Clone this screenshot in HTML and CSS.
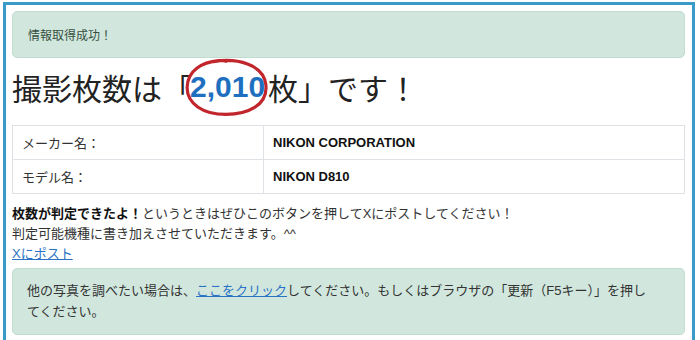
FILE: index.html
```html
<!DOCTYPE html>
<html lang="ja">
<head>
    <meta charset="UTF-8">
    <meta name="viewport" content="width=device-width, initial-scale=1.0">
    <title>撮影枚数チェッカー</title>
    <link rel="stylesheet" href="styles.css">
</head>
<body>
    <div class="frame">
        <div class="alert alert-ok">情報取得成功！</div>

        <h1 class="count-title">撮影枚数は「<span class="count"><span class="count-num">2,010</span><svg class="circle" viewBox="0 0 80 58" width="80" height="58" preserveAspectRatio="none" aria-hidden="true"><path d="M28 4.5 C 50 0.5, 76 7, 78 27 C 80 47, 60 55.5, 40 55.5 C 18 55.5, 2.5 45, 3 29 C 3.5 13, 17 5, 33 3.5 C 36 3.2, 38 3.5, 40 4.2" fill="none" stroke="#c1262d" stroke-width="3" stroke-linecap="round"/></svg></span>枚」です！</h1>

        <table class="info">
            <tr>
                <td class="label">メーカー名：</td>
                <td class="value">NIKON CORPORATION</td>
            </tr>
            <tr>
                <td class="label">モデル名：</td>
                <td class="value">NIKON D810</td>
            </tr>
        </table>

        <p class="note">
            <strong>枚数が判定できたよ！</strong>というときはぜひこのボタンを押してXにポストしてください！<br>
            判定可能機種に書き加えさせていただきます。^^<br>
            <a href="#">Xにポスト</a>
        </p>

        <div class="alert alert-info">
            他の写真を調べたい場合は、<a href="#">ここをクリック</a>してください。もしくはブラウザの「更新（F5キー）」を押してください。
        </div>
    </div>
</body>
</html>
```

FILE: styles.css
```css
body {
    margin: 0;
    background-color: #ffffff;
    font-family: 'Liberation Sans', 'Noto Sans CJK JP', sans-serif;
    color: #333333;
}

.frame {
    box-sizing: border-box;
    width: 692px;
    height: 340px;
    margin: 2px 0 0 3px;
    padding: 6px 7px 0 6px;
    border: 3px solid #3b9bc8;
    border-bottom: none;
}

.alert {
    border: 1px solid #c2dccf;
    border-radius: 5px;
    background-color: #d1e7dd;
}

.alert-ok {
    height: 47px;
    box-sizing: border-box;
    padding: 0 15px;
    display: flex;
    align-items: center;
    font-size: 12px;
    color: #36503f;
}

.count-title {
    margin: 0;
    height: 67px;
    box-sizing: border-box;
    padding-bottom: 9px;
    display: flex;
    align-items: center;
    font-size: 30px;
    font-weight: normal;
    color: #222222;
}

.count {
    position: relative;
    display: inline-block;
    line-height: 34px;
    padding: 0 3px 0 0;
    margin-left: -2px;
}

.count-num {
    font-weight: bold;
    color: #1f6fc0;
}

.circle {
    position: absolute;
    left: -6px;
    top: -13px;
    width: 84px;
    height: 60px;
}

.info {
    width: 100%;
    border-collapse: collapse;
    font-size: 13px;
}

.info td {
    height: 33px;
    padding: 0 9px;
    border: 1px solid #dee2e6;
}

.info .label {
    width: 232px;
}

.info .value {
    font-weight: bold;
    color: #111111;
}

.note {
    margin: 10px 0 4px;
    font-size: 13px;
    line-height: 20px;
}

.note strong {
    color: #111111;
}

a {
    color: #2a72c4;
    text-decoration: underline;
}

.alert-info {
    padding: 11px 32px 12px 14px;
    font-size: 13px;
    line-height: 21px;
    color: #333333;
}
```
